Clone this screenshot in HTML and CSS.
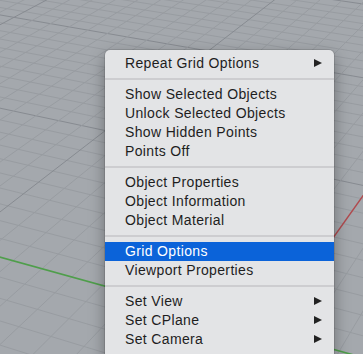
FILE: index.html
```html
<!DOCTYPE html>
<html lang="en">
<head>
  <meta charset="UTF-8" />
  <meta name="viewport" content="width=device-width, initial-scale=1.0"/>
  <title>Viewport Menu</title>
  <link rel="stylesheet" href="styles.css">
</head>
<body>

  <div class="viewport">
    <!-- Perspective grid, filled in by script.js -->
    <svg id="grid" class="grid" width="363" height="354"></svg>

    <!-- Context menu -->
    <ul class="menu">
      <li class="item has-sub">Repeat Grid Options</li>
      <li class="sep"></li>
      <li class="item">Show Selected Objects</li>
      <li class="item">Unlock Selected Objects</li>
      <li class="item">Show Hidden Points</li>
      <li class="item">Points Off</li>
      <li class="sep"></li>
      <li class="item">Object Properties</li>
      <li class="item">Object Information</li>
      <li class="item">Object Material</li>
      <li class="sep"></li>
      <li class="item active">Grid Options</li>
      <li class="item">Viewport Properties</li>
      <li class="sep"></li>
      <li class="item has-sub">Set View</li>
      <li class="item has-sub">Set CPlane</li>
      <li class="item has-sub">Set Camera</li>
    </ul>
  </div>

  <script src="script.js"></script>
</body>
</html>
```

FILE: styles.css
```css
* { box-sizing: border-box; }

body {
  margin: 0;
  font-family: "Liberation Sans", Arial, sans-serif;
}

.viewport {
  position: relative;
  width: 363px;
  height: 354px;
  overflow: hidden;
  background-color: #a4a8ad;
}

.grid {
  display: block;
}

.menu {
  position: absolute;
  left: 105px;
  top: 50px;
  width: 229px;
  margin: 0;
  padding: 4px 0 10px;
  list-style: none;
  background-color: #e3e4e6;
  border-radius: 5px;
  box-shadow: 0 0 0 1px rgba(0, 0, 0, 0.1), 0 6px 16px rgba(0, 0, 0, 0.35);
}

.item {
  display: flex;
  justify-content: space-between;
  align-items: center;
  height: 19px;
  line-height: 19px;
  padding: 0 12px 0 20px;
  font-size: 14px;
  letter-spacing: 0.35px;
  color: #1e1e1e;
}

.item.active {
  background-color: #0b63d9;
  color: white;
}

.has-sub::after {
  content: "";
  margin-top: -1px;
  border-left: 8px solid #222;
  border-top: 4.5px solid transparent;
  border-bottom: 4.5px solid transparent;
}

.sep {
  height: 2px;
  margin: 5px 0;
  background-color: #cdcdd0;
}
```

FILE: script.js
```js
const svg = document.getElementById("grid");
const NS = "http://www.w3.org/2000/svg";

// vanishing points of the two line families and the world origin on screen
const VPA = [-2340, -390];
const VPB = [779, -390];
const O = [267, 331];
const A = 0.0135; // one grid step along the green axis
const B = 0.025;  // one grid step along the red axis

function project(m, k) {
  const w = 1 + m * A + k * B;
  return [
    (O[0] + m * A * VPA[0] + k * B * VPB[0]) / w,
    (O[1] + m * A * VPA[1] + k * B * VPB[1]) / w
  ];
}

function addLine(from, through, color, width) {
  const line = document.createElementNS(NS, "line");
  line.setAttribute("x1", from[0]);
  line.setAttribute("y1", from[1]);
  line.setAttribute("x2", from[0] + 3 * (through[0] - from[0]));
  line.setAttribute("y2", from[1] + 3 * (through[1] - from[1]));
  line.setAttribute("stroke", color);
  line.setAttribute("stroke-width", width);
  svg.appendChild(line);
}

function lineColor(i) {
  return i % 10 === 0 ? "#878b91" : "#989ca1";
}

// lines running toward the left vanishing point
for (let k = -6; k <= 50; k++) {
  if (k === 0) continue;
  addLine(VPA, project(0, k), lineColor(k), 1);
}

// lines running toward the right vanishing point
for (let m = -12; m <= 40; m++) {
  if (m === 0) continue;
  addLine(VPB, project(m, 0), lineColor(m), 1);
}

// axes drawn last so they sit on top
addLine(VPA, project(0, 0), "#4f9e4b", 1.6);
addLine(VPB, project(0, 0), "#b04a4e", 1.4);
```
